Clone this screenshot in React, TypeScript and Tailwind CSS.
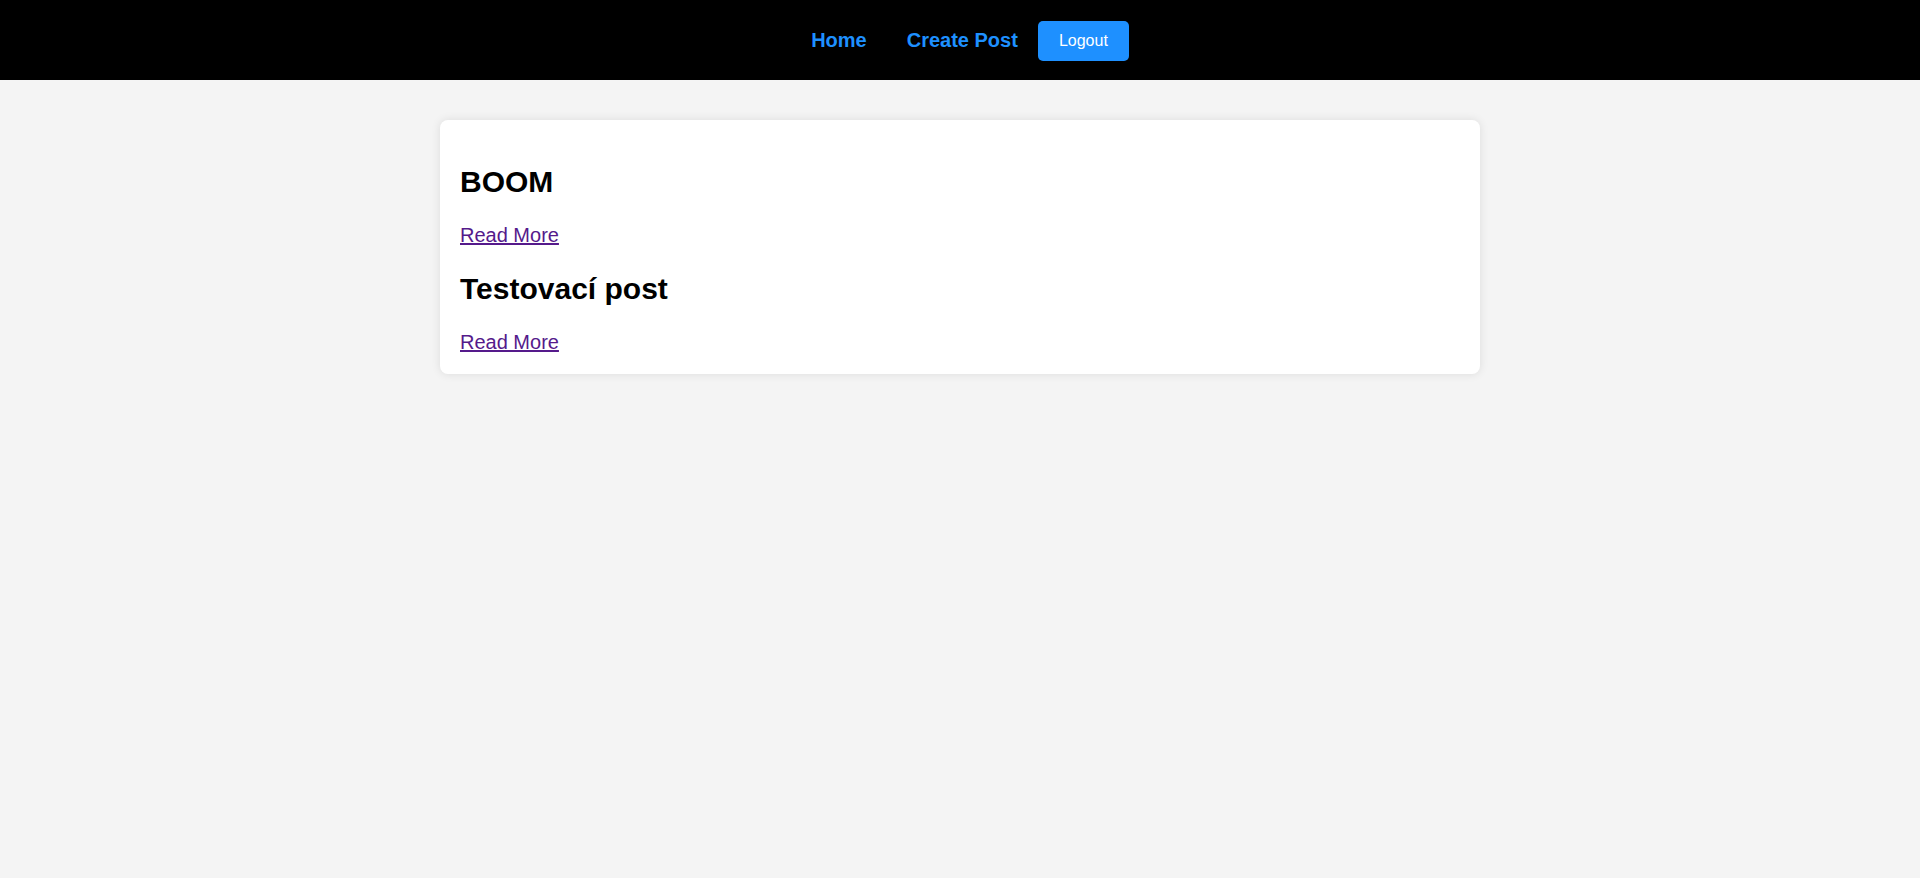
const posts = [
  { id: 1, title: "BOOM" },
  { id: 2, title: "Testovací post" },
];

export default function App() {
  return (
    <div className="min-h-screen bg-[#f4f4f4] font-['Liberation_Sans',Arial,sans-serif]">
      {/* Top navigation */}
      <nav className="h-20 bg-black flex items-center justify-center">
        <a href="#" className="mx-5 text-[20px] font-bold text-[#1e90ff]">
          Home
        </a>
        <a href="#" className="mx-5 text-[20px] font-bold text-[#1e90ff]">
          Create Post
        </a>
        <button className="h-10 w-[91px] mt-0.5 rounded-[5px] bg-[#1e90ff] text-white text-base">
          Logout
        </button>
      </nav>

      {/* Post list */}
      <main className="pt-10">
        <div className="max-w-[1040px] mx-auto bg-white rounded-lg p-5 shadow-[0_0_10px_rgba(0,0,0,0.1)]">
          {posts.map((post) => (
            <div key={post.id}>
              <h2 className="my-[25px] text-[30px] font-bold text-black leading-[34px]">
                {post.title}
              </h2>
              <a href="#" className="block text-[20px] leading-[23px] text-[#551a8b] underline">
                Read More
              </a>
            </div>
          ))}
        </div>
      </main>
    </div>
  );
}
